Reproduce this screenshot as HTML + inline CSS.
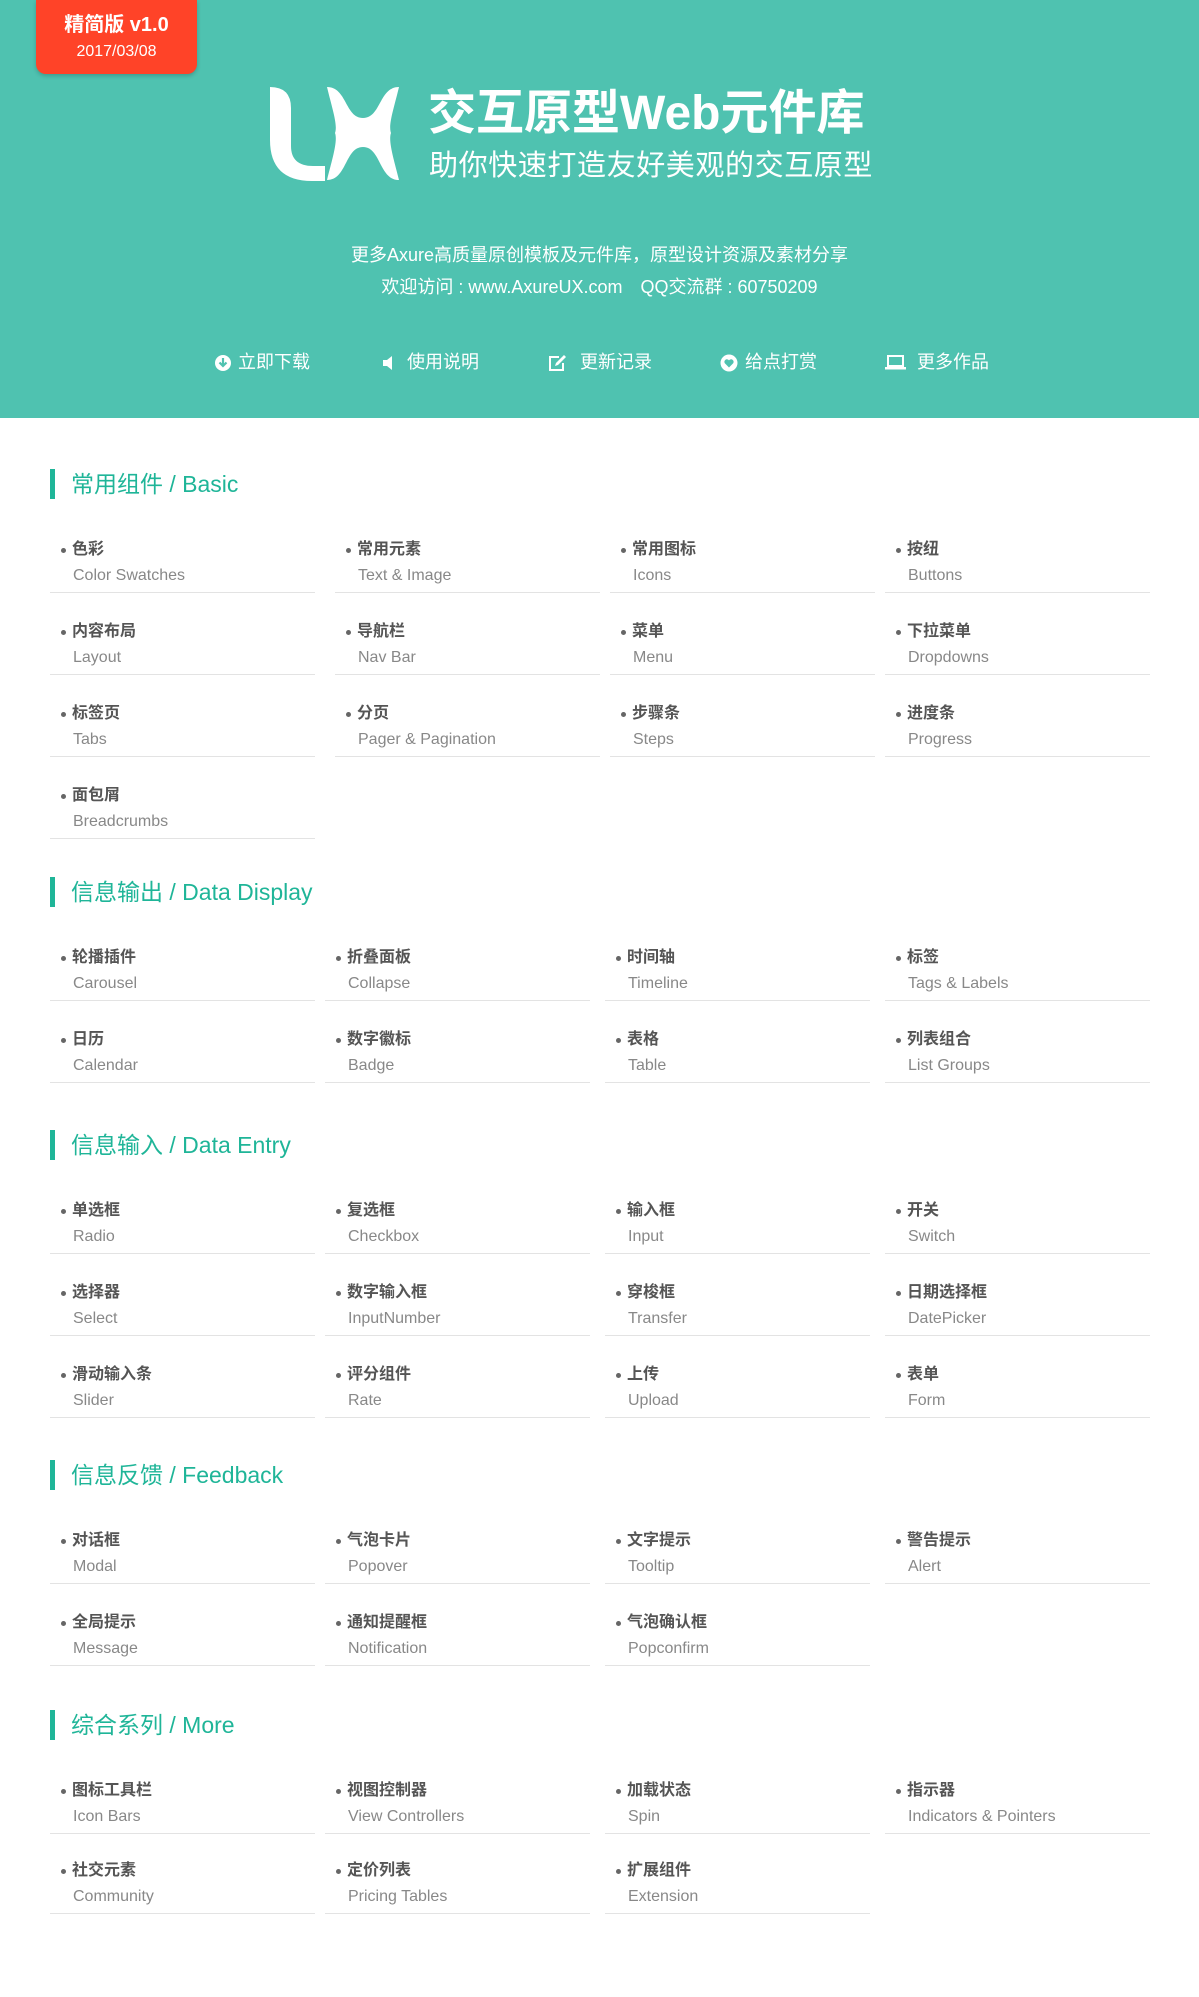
<!DOCTYPE html>
<html><head><meta charset="utf-8">
<style>
*{margin:0;padding:0;box-sizing:border-box}
body{width:1199px;height:1997px;background:#fff;position:relative;font-family:"Liberation Sans","Noto Sans CJK SC",sans-serif;overflow:hidden}
.hdr{position:absolute;left:0;top:0;width:1199px;height:418px;background:#4fc2b0}
.badge{position:absolute;left:36px;top:0;width:161px;height:74px;background:#ff4328;border-radius:0 0 10px 10px;box-shadow:0 2px 4px rgba(0,0,0,.2);color:#fff;text-align:center}
.badge .a{position:absolute;left:0;right:0;top:12px;font-size:20px;font-weight:bold;line-height:26px}
.badge .b{position:absolute;left:0;right:0;top:42px;font-size:16px;line-height:20px}
.t1{position:absolute;left:428px;top:86px;font-size:48px;font-weight:bold;color:#fff;line-height:56px;white-space:nowrap}
.t2{position:absolute;left:429px;top:148px;font-size:29px;color:#fff;line-height:36px;letter-spacing:0.6px;white-space:nowrap}
.info{position:absolute;left:0;width:1199px;text-align:center;color:#fff;font-size:18px;line-height:24px;white-space:nowrap}
.nav{position:absolute;top:350px;color:#fff;font-size:18px;line-height:24px;white-space:nowrap}
.nav svg{position:absolute;top:4px}
.sec{position:absolute;left:0;width:1199px}
.sec h2{position:relative;height:30px;line-height:30px;font-size:23px;font-weight:normal;color:#1fb598;padding-left:71px;white-space:nowrap}
.sec h2:before{content:"";position:absolute;left:50px;top:0;width:5px;height:30px;background:#1fb598}
.grid{position:relative;margin-top:12px}
.it{position:absolute;width:265px;height:82px;border-bottom:1px solid #e3e3e3;padding-top:27px}
.cn{font-size:16px;font-weight:bold;color:#555;line-height:24px;padding-left:22px;position:relative;white-space:nowrap}
.cn:before{content:"";position:absolute;left:11px;top:10px;width:5px;height:5px;border-radius:50%;background:#666}
.en{font-size:16px;color:#888;line-height:24px;margin-top:2px;padding-left:23px;white-space:nowrap}
</style></head><body>
<div class="hdr">
<div class="badge"><div class="a">精简版 v1.0</div><div class="b">2017/03/08</div></div>
<svg style="position:absolute;left:0;top:0" width="420" height="200">
<path fill="#fff" d="M270,87 Q291,87 291,108 L291,146 Q291,166 313,166 L325,166 L325,181 L312,181 Q270,181 270,140 Z"/>
<path fill="#fff" d="M327,87 C347,87 345,118 363,118 C381,118 379,87 399,87 C394,108 388,125 391,133 C388,141 394,160 399,180 C379,180 381,147 363,147 C345,147 347,180 327,180 C332,160 338,141 335,133 C338,125 332,108 327,87 Z"/>
</svg>
<div class="t1">交互原型Web元件库</div>
<div class="t2">助你快速打造友好美观的交互原型</div>
<div class="info" style="top:243px">更多Axure高质量原创模板及元件库，原型设计资源及素材分享</div>
<div class="info" style="top:275px">欢迎访问 : www.AxureUX.com　QQ交流群 : 60750209</div>

<div class="nav" style="left:214px"><svg style="left:0" width="18" height="18" viewBox="0 0 18 18"><circle cx="9" cy="9" r="8" fill="#fff"/><path d="M9 4v8M5.5 8.5L9 12l3.5-3.5" stroke="#4fc2b0" stroke-width="2.2" fill="none"/></svg><span style="margin-left:24px">立即下载</span></div>
<div class="nav" style="left:382px"><svg style="left:0" width="16" height="18" viewBox="0 0 16 18"><path d="M1 6h4l5-4v14l-5-4H1z" fill="#fff"/></svg><span style="margin-left:25px">使用说明</span></div>
<div class="nav" style="left:548px"><svg style="left:0" width="20" height="18" viewBox="0 0 20 18"><path d="M11 3H2v13h13V9" stroke="#fff" stroke-width="2" fill="none"/><path d="M7 12l1-3 8-8 2 2-8 8z" fill="#fff"/></svg><span style="margin-left:32px">更新记录</span></div>
<div class="nav" style="left:720px"><svg style="left:0" width="18" height="18" viewBox="0 0 18 18"><circle cx="9" cy="9" r="8.5" fill="#fff"/><path d="M9 13.5L4.8 9.2A2.3 2.3 0 0 1 9 6.4a2.3 2.3 0 0 1 4.2 2.8z" fill="#4fc2b0"/></svg><span style="margin-left:25px">给点打赏</span></div>
<div class="nav" style="left:885px"><svg style="left:0" width="22" height="18" viewBox="0 0 22 18"><rect x="3" y="2" width="15" height="10" stroke="#fff" stroke-width="2" fill="none"/><rect x="0" y="13" width="21" height="2.5" fill="#fff"/></svg><span style="margin-left:32px">更多作品</span></div>
</div>

<div class="sec" style="top:469px"><h2>常用组件 / Basic</h2><div class="grid">
<div class="it" style="left:50px;top:0"><div class="cn">色彩</div><div class="en">Color Swatches</div></div>
<div class="it" style="left:335px;top:0"><div class="cn">常用元素</div><div class="en">Text &amp; Image</div></div>
<div class="it" style="left:610px;top:0"><div class="cn">常用图标</div><div class="en">Icons</div></div>
<div class="it" style="left:885px;top:0"><div class="cn">按纽</div><div class="en">Buttons</div></div>
<div class="it" style="left:50px;top:82px"><div class="cn">内容布局</div><div class="en">Layout</div></div>
<div class="it" style="left:335px;top:82px"><div class="cn">导航栏</div><div class="en">Nav Bar</div></div>
<div class="it" style="left:610px;top:82px"><div class="cn">菜单</div><div class="en">Menu</div></div>
<div class="it" style="left:885px;top:82px"><div class="cn">下拉菜单</div><div class="en">Dropdowns</div></div>
<div class="it" style="left:50px;top:164px"><div class="cn">标签页</div><div class="en">Tabs</div></div>
<div class="it" style="left:335px;top:164px"><div class="cn">分页</div><div class="en">Pager &amp; Pagination</div></div>
<div class="it" style="left:610px;top:164px"><div class="cn">步骤条</div><div class="en">Steps</div></div>
<div class="it" style="left:885px;top:164px"><div class="cn">进度条</div><div class="en">Progress</div></div>
<div class="it" style="left:50px;top:246px"><div class="cn">面包屑</div><div class="en">Breadcrumbs</div></div>
</div></div>

<div class="sec" style="top:877px"><h2>信息输出 / Data Display</h2><div class="grid">
<div class="it" style="left:50px;top:0"><div class="cn">轮播插件</div><div class="en">Carousel</div></div>
<div class="it" style="left:325px;top:0"><div class="cn">折叠面板</div><div class="en">Collapse</div></div>
<div class="it" style="left:605px;top:0"><div class="cn">时间轴</div><div class="en">Timeline</div></div>
<div class="it" style="left:885px;top:0"><div class="cn">标签</div><div class="en">Tags &amp; Labels</div></div>
<div class="it" style="left:50px;top:82px"><div class="cn">日历</div><div class="en">Calendar</div></div>
<div class="it" style="left:325px;top:82px"><div class="cn">数字徽标</div><div class="en">Badge</div></div>
<div class="it" style="left:605px;top:82px"><div class="cn">表格</div><div class="en">Table</div></div>
<div class="it" style="left:885px;top:82px"><div class="cn">列表组合</div><div class="en">List Groups</div></div>
</div></div>

<div class="sec" style="top:1130px"><h2>信息输入 / Data Entry</h2><div class="grid">
<div class="it" style="left:50px;top:0"><div class="cn">单选框</div><div class="en">Radio</div></div>
<div class="it" style="left:325px;top:0"><div class="cn">复选框</div><div class="en">Checkbox</div></div>
<div class="it" style="left:605px;top:0"><div class="cn">输入框</div><div class="en">Input</div></div>
<div class="it" style="left:885px;top:0"><div class="cn">开关</div><div class="en">Switch</div></div>
<div class="it" style="left:50px;top:82px"><div class="cn">选择器</div><div class="en">Select</div></div>
<div class="it" style="left:325px;top:82px"><div class="cn">数字输入框</div><div class="en">InputNumber</div></div>
<div class="it" style="left:605px;top:82px"><div class="cn">穿梭框</div><div class="en">Transfer</div></div>
<div class="it" style="left:885px;top:82px"><div class="cn">日期选择框</div><div class="en">DatePicker</div></div>
<div class="it" style="left:50px;top:164px"><div class="cn">滑动输入条</div><div class="en">Slider</div></div>
<div class="it" style="left:325px;top:164px"><div class="cn">评分组件</div><div class="en">Rate</div></div>
<div class="it" style="left:605px;top:164px"><div class="cn">上传</div><div class="en">Upload</div></div>
<div class="it" style="left:885px;top:164px"><div class="cn">表单</div><div class="en">Form</div></div>
</div></div>

<div class="sec" style="top:1460px"><h2>信息反馈 / Feedback</h2><div class="grid">
<div class="it" style="left:50px;top:0"><div class="cn">对话框</div><div class="en">Modal</div></div>
<div class="it" style="left:325px;top:0"><div class="cn">气泡卡片</div><div class="en">Popover</div></div>
<div class="it" style="left:605px;top:0"><div class="cn">文字提示</div><div class="en">Tooltip</div></div>
<div class="it" style="left:885px;top:0"><div class="cn">警告提示</div><div class="en">Alert</div></div>
<div class="it" style="left:50px;top:82px"><div class="cn">全局提示</div><div class="en">Message</div></div>
<div class="it" style="left:325px;top:82px"><div class="cn">通知提醒框</div><div class="en">Notification</div></div>
<div class="it" style="left:605px;top:82px"><div class="cn">气泡确认框</div><div class="en">Popconfirm</div></div>
</div></div>

<div class="sec" style="top:1710px"><h2>综合系列 / More</h2><div class="grid">
<div class="it" style="left:50px;top:0"><div class="cn">图标工具栏</div><div class="en">Icon Bars</div></div>
<div class="it" style="left:325px;top:0"><div class="cn">视图控制器</div><div class="en">View Controllers</div></div>
<div class="it" style="left:605px;top:0"><div class="cn">加载状态</div><div class="en">Spin</div></div>
<div class="it" style="left:885px;top:0"><div class="cn">指示器</div><div class="en">Indicators &amp; Pointers</div></div>
<div class="it" style="left:50px;top:80px"><div class="cn">社交元素</div><div class="en">Community</div></div>
<div class="it" style="left:325px;top:80px"><div class="cn">定价列表</div><div class="en">Pricing Tables</div></div>
<div class="it" style="left:605px;top:80px"><div class="cn">扩展组件</div><div class="en">Extension</div></div>
</div></div>
</body></html>
